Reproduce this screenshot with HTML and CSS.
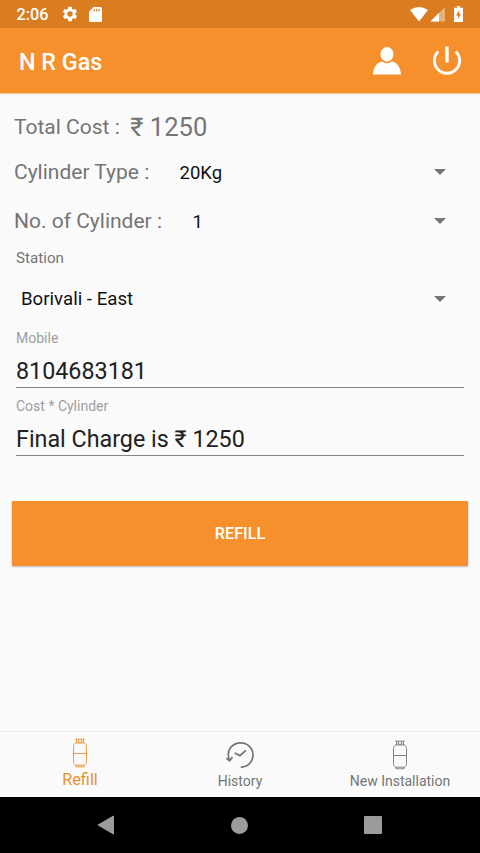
FILE: index.html
```html
<!DOCTYPE html>
<html lang="en">
<head>
<meta charset="utf-8">
<title>N R Gas</title>
<link rel="stylesheet" href="styles.css">
</head>
<body>
<svg class="defs" width="0" height="0" aria-hidden="true">
  <symbol id="cylinder" viewBox="0 0 16 30">
    <path d="M3.5 1.200h9M4.500 1v4M11.500 1v4M6.300 1.500v2.700h3.400V1.500M3.500 5h9c1.300.8 2 2 2 3.600v15c0 1.700-.8 2.900-2 3.600h-9c-1.200-.7-2-1.900-2-3.600v-15C1.500 7 2.200 5.800 3.500 5zM1.500 15.500h13M4 27.200v1.600h8v-1.600" fill="none" stroke="currentColor" stroke-width=".9"/>
  </symbol>
</svg>
<div class="screen">
  <div class="status">
    <span class="clock">2:06</span>
    <svg class="gear" width="18" height="18" viewBox="0 0 24 24"><path d="M19.140 12.940c.04-.3.06-.61.06-.94s-.02-.64-.07-.94l2.030-1.580a.49.49 0 0 0 .12-.61l-1.920-3.320a.49.49 0 0 0-.59-.22l-2.390.96a7 7 0 0 0-1.620-.94l-.36-2.540a.48.48 0 0 0-.48-.41h-3.840a.47.47 0 0 0-.47.41l-.36 2.540c-.59.24-1.130.57-1.620.94l-2.390-.96a.47.47 0 0 0-.59.22L2.740 8.870a.47.47 0 0 0 .12.61l2.030 1.580c-.05.3-.09.63-.09.94s.02.64.07.94l-2.030 1.580a.49.49 0 0 0-.12.61l1.920 3.320c.12.22.37.29.59.22l2.390-.96c.5.38 1.030.7 1.620.94l.36 2.540c.05.24.24.41.48.41h3.840c.24 0 .44-.17.47-.41l.36-2.540a7 7 0 0 0 1.620-.94l2.390.96c.22.08.47 0 .59-.22l1.920-3.320a.47.47 0 0 0-.12-.61zM12 15.600a3.600 3.600 0 1 1 0-7.200 3.600 3.600 0 0 1 0 7.200z" fill="#fff"/></svg>
    <svg class="card" width="13" height="15" viewBox="0 0 13 15"><path d="M4.500 0H11.500Q13 0 13 1.500V13.500Q13 15 11.500 15H1.500Q0 15 0 13.500V4.500z" fill="#fff"/><path d="M5.300 2v2.500M7.700 2v2.500M10.100 2v2.500" stroke="#d97d20" stroke-width="1.200"/></svg>
    <div class="signals">
      <svg width="18" height="15" viewBox="0 0 18 15"><path d="M0 3Q9-3 18 3L9 14.500z" fill="#fff"/></svg>
      <svg class="cell" width="15" height="15" viewBox="0 0 15 15"><path d="M15 0v14.500H.5z" fill="#fff" opacity=".4"/><path d="M9 5.800v8.700H.5z" fill="#fff"/></svg>
      <svg class="battery" width="9" height="16" viewBox="0 0 9 16"><path d="M3 0h3v1.700h3V16H0V1.700h3z" fill="#fff"/><path d="M5.300 4L2 9.500h2V13l3-5H5.300z" fill="#d97d20"/></svg>
    </div>
  </div>
  <header class="appbar">
    <h1>N R Gas</h1>
    <svg class="user" width="28" height="28" viewBox="0 0 28 28"><ellipse cx="14" cy="7.300" rx="6.500" ry="7.200" fill="#fff"/><path d="M0 27.500C.5 19 4.500 15.500 9 14.500Q14 18 19 14.500C23.500 15.500 27.500 19 28 27.500z" fill="#fff"/></svg>
    <svg class="power" width="30" height="30" viewBox="0 0 30 30"><path d="M6.300 5.500a12.600 12.600 0 1 0 17.400 0" fill="none" stroke="#fff" stroke-width="2.900"/><path d="M15 .5v16" stroke="#fff" stroke-width="3.300"/></svg>
  </header>
  <main class="form">
    <div class="row cost"><span class="label">Total Cost :</span><span class="amount">₹ 1250</span></div>
    <div class="row kind"><span class="label">Cylinder Type :</span><span class="value">20Kg</span><i class="arrow"></i></div>
    <div class="row count"><span class="label">No. of Cylinder :</span><span class="value">1</span><i class="arrow"></i></div>
    <div class="caption station">Station</div>
    <div class="row place"><span class="value">Borivali - East</span><i class="arrow"></i></div>
    <div class="caption hint">Mobile</div>
    <div class="field">8104683181</div>
    <div class="caption hint">Cost * Cylinder</div>
    <div class="field">Final Charge is ₹ 1250</div>
    <button class="refill">REFILL</button>
  </main>
  <nav class="tabs">
    <div class="tab active"><svg width="16" height="30"><use href="#cylinder"/></svg><span>Refill</span></div>
    <div class="tab"><svg width="28" height="28" viewBox="0 0 28 28"><path d="M3.300 19C-.2 9.500 6 1.800 14.800 1.800A12.200 12.200 0 0 1 14.800 26.200" fill="none" stroke="currentColor" stroke-width="1.700"/><path d="M.4 17.200l3.200 2.600 2.800-3.700M8.600 12l5.300 2.600 6-5.300" fill="none" stroke="currentColor" stroke-width="1.800"/></svg><span>History</span></div>
    <div class="tab install"><svg width="16" height="30"><use href="#cylinder"/></svg><span>New Installation</span></div>
  </nav>
  <div class="system">
    <svg width="18" height="20" viewBox="0 0 18 20"><path d="M1 10L16.500 1v18z" fill="#9b9b9b" stroke="#9b9b9b" stroke-linejoin="round"/></svg>
    <i class="home"></i>
    <i class="recent"></i>
  </div>
</div>
</body>
</html>
```
FILE: styles.css
```css
* { box-sizing: border-box; }
body { margin: 0; font-family: Roboto, "Noto Sans", sans-serif; background: #fafafa; }
.defs { display: block; }
.screen { width: 480px; height: 853px; display: flex; flex-direction: column; overflow: hidden; }
svg { display: block; flex: none; }

.status { height: 28px; flex: none; background: #d97d20; display: flex; align-items: center; padding: 0 17px 0 16.500px; color: #fff; }
.clock { width: 44.500px; font-size: 16.3px; font-weight: 500; line-height: 20px; padding-top: 1px; }
.card { margin-left: 10px; }
.signals { display: flex; align-items: center; margin-left: auto; }
.cell { margin-left: 2px; }
.battery { margin-left: 9px; }

.appbar { height: 65px; flex: none; background: #f5902c; display: flex; align-items: center; padding: 0 18px 0 19px; color: #fff; box-shadow: 0 1px 1px rgba(245, 144, 44, .45); }
h1 { margin: 2px auto 0 0; font-size: 23.3px; font-weight: 500; line-height: 28px; }
.power { margin-left: 31px; }

.form { flex: 1; display: flex; flex-direction: column; padding: 10px 12px 0; }
.row { display: flex; align-items: center; flex: none; padding: 0 22px 0 2px; color: #757575; }
.label { font-size: 21px; }
.amount { font-size: 25.6px; margin-left: 10.500px; }
.value { font-size: 18.67px; color: #111; }
.cost { height: 48px; }
.kind { height: 42px; }
.kind .label { width: 165.500px; }
.count { height: 56px; }
.count .label { width: 178.500px; }
.kind .value, .count .value { padding-top: 1px; font-size: 18.500px; }
.place { height: 52px; padding-left: 9px; }
.arrow { margin-left: auto; border: 6px solid transparent; border-top-color: #757575; border-bottom: 0; }
.caption { flex: none; font-size: 14px; line-height: 18px; padding-left: 4px; color: #757575; }
.station { font-size: 15.200px; height: 24px; }
.hint { color: #9e9e9e; padding-top: 4px; height: 30px; }
.field { flex: none; height: 33px; line-height: 32px; margin: 0 4px; font-size: 23.3px; color: #212121; border-bottom: 1px solid #858585; }
.field + .hint { height: 35px; padding-top: 9px; }
.refill { height: 65px; flex: none; margin-top: 45px; border: 0; background: #f5902c; color: #fff; font: 500 16.3px Roboto, sans-serif; box-shadow: 0 1px 2px rgba(0, 0, 0, .25); }

.tabs { height: 66px; flex: none; display: grid; grid-template-columns: repeat(3, 1fr); border-top: 1px solid #ededed; color: #757575; }
.tab { display: flex; flex-direction: column; align-items: center; justify-content: space-between; padding: 9px 0 8px; font-size: 14px; line-height: 16px; }
.install { padding-top: 8px; }
.active { color: #e5922e; font-size: 16.3px; padding: 6px 0 9px; }
.system { height: 56px; flex: none; background: #000; display: flex; align-items: center; justify-content: space-between; padding: 0 98px 0 97px; }
.home { width: 17px; height: 17px; border-radius: 50%; background: #9b9b9b; }
.recent { width: 18px; height: 18px; border-radius: 1px; background: #9b9b9b; }
```
